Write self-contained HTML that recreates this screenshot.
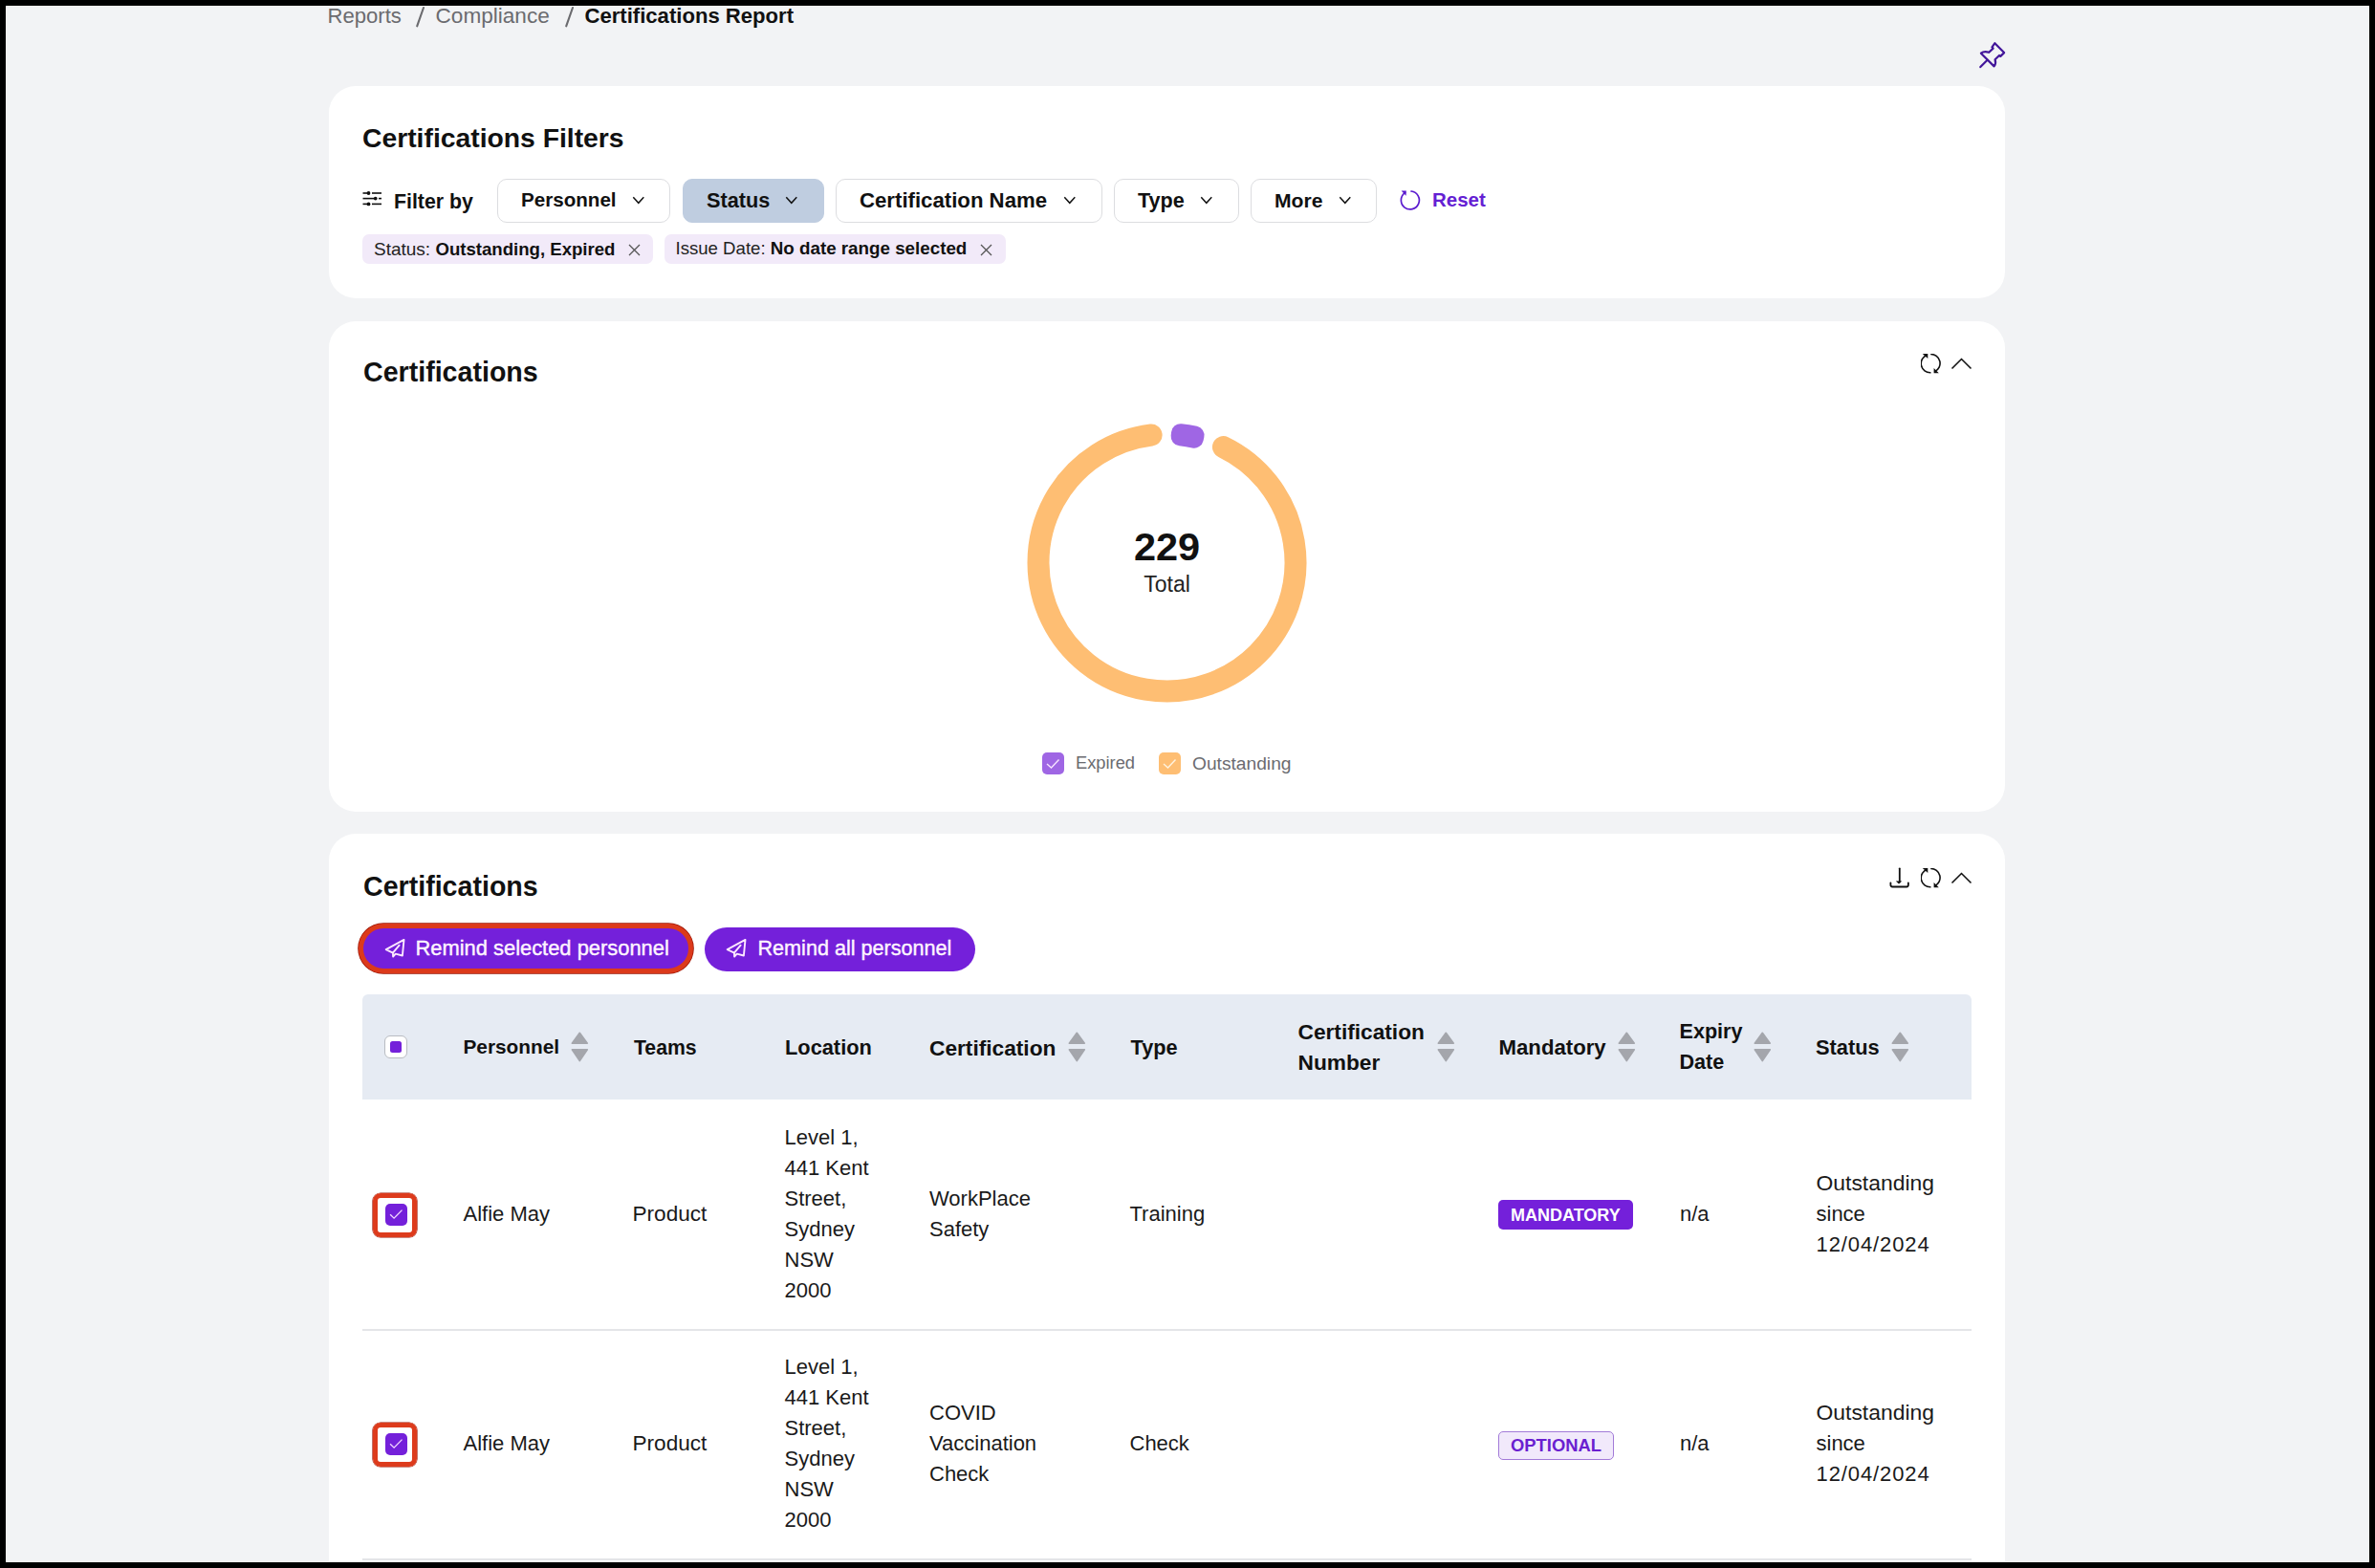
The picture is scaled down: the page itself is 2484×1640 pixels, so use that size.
<!DOCTYPE html>
<html><head><meta charset="utf-8">
<style>
*{box-sizing:border-box;margin:0;padding:0}
html,body{width:2484px;height:1640px;overflow:hidden;background:#f2f3f5}
body{position:relative;font-family:"Liberation Sans",sans-serif;color:#111}
.a{position:absolute}
.t{position:absolute;white-space:nowrap;line-height:1}
.b{font-weight:700}
.card{position:absolute;left:344px;width:1753px;background:#fff;border-radius:28px}
.frame{position:absolute;left:0;top:0;width:2484px;height:1640px;border:6px solid #000;box-shadow:inset 0 0 0 1px #fff;pointer-events:none;z-index:50}
.fbtn{position:absolute;top:187px;height:46px;border:1.5px solid #dcdde0;border-radius:10px;background:#fff}
.chev{position:absolute}
.chip{position:absolute;top:245px;height:31px;background:#f2eaf9;border-radius:7px}
.hd{position:absolute;white-space:nowrap;line-height:1;font-weight:700;font-size:22px;color:#111}
.cell{position:absolute;white-space:nowrap;font-size:22px;line-height:32px;color:#1a1a1a}
.sort{position:absolute;width:20px;height:33px}
</style></head><body>

<!-- breadcrumb -->
<div class="t" style="left:342.5px;top:5.8px;font-size:22.1px;color:#6b6b6f">Reports</div>
<svg class="a" style="left:425px;top:0" width="30" height="34" viewBox="0 0 30 34"><path d="M18 8 L11.2 27.3" stroke="#6b6b6f" stroke-width="2.1" stroke-linecap="round"/></svg>
<div class="t" style="left:455.5px;top:5.8px;font-size:22.6px;color:#6b6b6f">Compliance</div>
<svg class="a" style="left:580.5px;top:0" width="30" height="34" viewBox="0 0 30 34"><path d="M18 8 L11.2 27.3" stroke="#6b6b6f" stroke-width="2.1" stroke-linecap="round"/></svg>
<div class="t b" style="left:611.5px;top:5.8px;font-size:22.1px;color:#111">Certifications Report</div>

<!-- pin -->
<svg class="a" style="left:2060px;top:35px" width="50" height="50" viewBox="0 0 50 50">
<g fill="none" stroke="#43169a" stroke-width="2.2" stroke-linejoin="round" stroke-linecap="round">
<path d="M18.6 27.7 L11.3 35.1"/>
<path d="M26.4 10.2 L36.1 20.1 L32.3 23.9 L31 23 L26.6 27.3 C27.6 30 27.2 32.3 25.6 34.4 L11.9 20.7 C14 19 16.6 18.6 20.2 19.8 L24.6 15.6 L23.4 14.3 Z"/>
</g></svg>

<!-- FILTER CARD -->
<div class="card" style="top:90px;height:222px"></div>
<div class="t b" style="left:379px;top:130.3px;font-size:28.3px">Certifications Filters</div>

<!-- filter icon -->
<svg class="a" style="left:378px;top:196px" width="24" height="24" viewBox="0 0 24 24">
<g stroke="#111" stroke-width="1.6" fill="#111">
<line x1="1.5" y1="6" x2="6" y2="6"/><line x1="11" y1="6" x2="21" y2="6"/><circle cx="7.5" cy="6" r="1.9" stroke="none"/>
<line x1="1.5" y1="11.6" x2="13" y2="11.6"/><line x1="18" y1="11.6" x2="21" y2="11.6"/><circle cx="14.7" cy="11.6" r="1.9" stroke="none"/>
<line x1="1.5" y1="17.4" x2="6" y2="17.4"/><line x1="11" y1="17.4" x2="21" y2="17.4"/><circle cx="7.5" cy="17.4" r="1.9" stroke="none"/>
</g></svg>
<div class="t b" style="left:412px;top:200.5px;font-size:21.3px">Filter by</div>

<div class="fbtn" style="left:520px;width:181px"></div>
<div class="t b" style="left:545px;top:199px;font-size:20.6px">Personnel</div>
<div class="fbtn" style="left:714px;width:148px;background:#bfcde0;border-color:#bfcde0"></div>
<div class="t b" style="left:739px;top:199px;font-size:21.7px">Status</div>
<div class="fbtn" style="left:874px;width:279px"></div>
<div class="t b" style="left:899px;top:199px;font-size:22.2px">Certification Name</div>
<div class="fbtn" style="left:1165px;width:131px"></div>
<div class="t b" style="left:1190px;top:199px;font-size:21.6px">Type</div>
<div class="fbtn" style="left:1308px;width:132px"></div>
<div class="t b" style="left:1333px;top:199px;font-size:21.1px">More</div>

<!-- chevrons down -->
<svg class="a" style="left:661px;top:204px" width="14" height="11" viewBox="0 0 14 11"><path d="M1.3 2.2 L6.8 8.3 L12.3 2.2" fill="none" stroke="#111" stroke-width="1.45"/></svg>
<svg class="a" style="left:821px;top:204px" width="14" height="11" viewBox="0 0 14 11"><path d="M1.3 2.2 L6.8 8.3 L12.3 2.2" fill="none" stroke="#111" stroke-width="1.45"/></svg>
<svg class="a" style="left:1112px;top:204px" width="14" height="11" viewBox="0 0 14 11"><path d="M1.3 2.2 L6.8 8.3 L12.3 2.2" fill="none" stroke="#111" stroke-width="1.45"/></svg>
<svg class="a" style="left:1255px;top:204px" width="14" height="11" viewBox="0 0 14 11"><path d="M1.3 2.2 L6.8 8.3 L12.3 2.2" fill="none" stroke="#111" stroke-width="1.45"/></svg>
<svg class="a" style="left:1400px;top:204px" width="14" height="11" viewBox="0 0 14 11"><path d="M1.3 2.2 L6.8 8.3 L12.3 2.2" fill="none" stroke="#111" stroke-width="1.45"/></svg>

<!-- reset -->
<svg class="a" style="left:1462px;top:197px" width="25" height="25" viewBox="0 0 25 25">
<g fill="none" stroke="#5b1bcf" stroke-width="1.7" stroke-linecap="round">
<path d="M14 3 A9.5 9.5 0 1 1 7.5 4.6"/>
</g>
<path d="M3.6 2.6 L8.8 2.4 L8.6 7.8 Z" fill="#5b1bcf"/>
</svg>
<div class="t b" style="left:1498px;top:199px;font-size:20.5px;color:#6420d3">Reset</div>

<!-- chips -->
<div class="chip" style="left:379px;width:304px"></div>
<div class="t" style="left:391px;top:251px;font-size:19px;color:#222">Status: <b style="font-size:18.6px;color:#111">Outstanding, Expired</b></div>
<svg class="a" style="left:656px;top:254px" width="15" height="15" viewBox="0 0 15 15"><path d="M2 2 L13 13 M13 2 L2 13" stroke="#555" stroke-width="1.3"/></svg>
<div class="chip" style="left:695px;width:357px"></div>
<div class="t" style="left:706.5px;top:251px;font-size:18.6px;color:#222">Issue Date: <b style="font-size:18.8px;color:#111">No date range selected</b></div>
<svg class="a" style="left:1024px;top:254px" width="15" height="15" viewBox="0 0 15 15"><path d="M2 2 L13 13 M13 2 L2 13" stroke="#555" stroke-width="1.3"/></svg>

<!-- CHART CARD -->
<div class="card" style="top:336px;height:513px"></div>
<div class="t b" style="left:380px;top:374.8px;font-size:28.6px">Certifications</div>

<!-- chart icons -->
<svg class="a" style="left:2009px;top:370px" width="21" height="21" viewBox="0 0 21 21">
<g fill="none" stroke="#111" stroke-width="1.6">
<path d="M10.5 19.7 A9.5 9.5 0 0 1 6.8 1.2"/>
<path d="M10.2 0.5 A9.5 9.5 0 0 1 14.6 18.6"/>
</g>
<path d="M1.8 0 L7.3 0 L7.3 5 Z M13.6 14.9 L13.6 20.2 L18.8 20.2 Z" fill="#111"/>
</svg>
<svg class="a" style="left:2040px;top:373px" width="23" height="14" viewBox="0 0 23 14"><path d="M1.5 12.5 L11.5 2.5 L21.5 12.5" fill="none" stroke="#111" stroke-width="1.55"/></svg>

<!-- donut -->
<svg class="a" style="left:1060px;top:428px" width="321" height="321" viewBox="0 0 321 321">
<path d="M 219.46 39.61 A 134.5 134.5 0 1 1 144.11 27.00" fill="none" stroke="#febe73" stroke-width="23" stroke-linecap="round"/>
<path d="M 174.75 24.95 A 136.3 136.3 0 0 1 189.77 27.38 L 189.00 30.90 A 132.7 132.7 0 0 0 174.37 28.53 Z" fill="#9f66e4" stroke="#9f66e4" stroke-width="19.5" stroke-linejoin="round"/>
</svg>
<div class="t b" style="left:1120px;width:201px;text-align:center;top:551px;font-size:41.5px">229</div>
<div class="t" style="left:1120px;width:201px;text-align:center;top:599.5px;font-size:23px;color:#222">Total</div>

<!-- legend -->
<div class="a" style="left:1090px;top:787px;width:23px;height:23px;border-radius:5px;background:#9f66e4"></div>
<svg class="a" style="left:1090px;top:787px" width="23" height="23" viewBox="0 0 23 23"><path d="M5 12 L9.5 16 L17.5 7.5" fill="none" stroke="#f6e3ff" stroke-width="1.4"/></svg>
<div class="t" style="left:1125px;top:789px;font-size:18.3px;color:#6b6b70">Expired</div>
<div class="a" style="left:1212px;top:787px;width:23px;height:23px;border-radius:5px;background:#febe73"></div>
<svg class="a" style="left:1212px;top:787px" width="23" height="23" viewBox="0 0 23 23"><path d="M5 12 L9.5 16 L17.5 7.5" fill="none" stroke="#fff3df" stroke-width="1.4"/></svg>
<div class="t" style="left:1247px;top:789px;font-size:19.2px;color:#6b6b70">Outstanding</div>


<!-- TABLE CARD -->
<div class="card" style="top:872px;height:800px"></div>
<div class="t b" style="left:380px;top:913px;font-size:28.6px">Certifications</div>

<!-- table card icons -->
<svg class="a" style="left:1976px;top:907px" width="22" height="22" viewBox="0 0 22 22">
<g fill="none" stroke="#111" stroke-width="1.8" stroke-linecap="round">
<path d="M10.8 1.3 L10.8 15.5"/>
<path d="M1.4 16.3 L1.4 18.6 Q1.4 20.5 3.3 20.5 L18.2 20.5 Q19.9 20.5 19.9 18.6 L19.9 16.3"/>
</g>
<path d="M6.8 14.4 L13.3 14.4 L10 17.6 Z" fill="#111"/>
</svg>
<svg class="a" style="left:2009px;top:907.5px" width="21" height="21" viewBox="0 0 21 21">
<g fill="none" stroke="#111" stroke-width="1.6">
<path d="M10.5 19.7 A9.5 9.5 0 0 1 6.8 1.2"/>
<path d="M10.2 0.5 A9.5 9.5 0 0 1 14.6 18.6"/>
</g>
<path d="M1.8 0 L7.3 0 L7.3 5 Z M13.6 14.9 L13.6 20.2 L18.8 20.2 Z" fill="#111"/>
</svg>
<svg class="a" style="left:2040px;top:911px" width="23" height="14" viewBox="0 0 23 14"><path d="M1.5 12.5 L11.5 2.5 L21.5 12.5" fill="none" stroke="#111" stroke-width="1.55"/></svg>

<!-- remind buttons -->
<div class="a" style="left:375px;top:966px;width:350px;height:52px;border-radius:26px;background:#7420da;border:5.5px solid #dc3a1b;box-shadow:0 0 0 0.8px #9b1505"></div>
<svg class="a" style="left:396.5px;top:976px" width="30" height="30" viewBox="0 0 30 30"><path d="M25.5 6.9 L6.7 17.1 L13.9 20.6 L14.1 24.5 L16.7 21.6 L23.9 23.5 Z M13.9 20.6 L20.6 12.7" fill="none" stroke="#fde8ff" stroke-width="1.9" stroke-linejoin="round" stroke-linecap="round"/></svg>
<div class="t" style="left:434.5px;top:981px;font-size:21.9px;color:#fff4ff;-webkit-text-stroke:0.4px #fff4ff">Remind selected personnel</div>
<div class="a" style="left:737px;top:970px;width:283px;height:46px;border-radius:23px;background:#7420da"></div>
<svg class="a" style="left:754px;top:976px" width="30" height="30" viewBox="0 0 30 30"><path d="M25.5 6.9 L6.7 17.1 L13.9 20.6 L14.1 24.5 L16.7 21.6 L23.9 23.5 Z M13.9 20.6 L20.6 12.7" fill="none" stroke="#fde8ff" stroke-width="1.9" stroke-linejoin="round" stroke-linecap="round"/></svg>
<div class="t" style="left:792.5px;top:981px;font-size:21.6px;color:#fff4ff;-webkit-text-stroke:0.4px #fff4ff">Remind all personnel</div>

<!-- table header -->
<div class="a" style="left:379px;top:1040px;width:1683px;height:110px;background:#e6ebf3;border-radius:6px 6px 0 0"></div>
<div class="a" style="left:402px;top:1083px;width:24px;height:23.5px;border:1.3px solid #b9bcc2;border-radius:6px;background:#fff"></div>
<div class="a" style="left:408px;top:1089px;width:11.5px;height:11.5px;border-radius:2.5px;background:#7420da"></div>

<div class="hd" style="left:484.5px;top:1085px;font-size:20.8px">Personnel</div>
<div class="hd" style="left:663px;top:1085px;font-size:21.2px">Teams</div>
<div class="hd" style="left:821px;top:1085px;font-size:21.8px">Location</div>
<div class="hd" style="left:972px;top:1085px;font-size:22.7px">Certification</div>
<div class="hd" style="left:1182.5px;top:1085px;font-size:21.7px">Type</div>
<div class="hd" style="left:1357.5px;top:1067.6px;font-size:22.7px;line-height:32px;top:1063.4px">Certification<br>Number</div>
<div class="hd" style="left:1567.5px;top:1085px;font-size:22.2px">Mandatory</div>
<div class="hd" style="left:1756.5px;line-height:32px;top:1063.4px;font-size:21.6px">Expiry<br>Date</div>
<div class="hd" style="left:1899px;top:1085px;font-size:21.8px">Status</div>

<svg width="0" height="0" style="position:absolute"><defs><g id="srt"><path d="M1.3 12.2 L9.3 1.3 L17.3 12.2 Z M1.3 18.8 L17.3 18.8 L9.3 30.6 Z" fill="#a4a6ac" stroke="#a4a6ac" stroke-width="1.6" stroke-linejoin="round"/></g></defs></svg>
<svg class="sort" style="left:597px;top:1079px" viewBox="0 0 20 33"><use href="#srt"/></svg>
<svg class="sort" style="left:1116.5px;top:1079px" viewBox="0 0 20 33"><use href="#srt"/></svg>
<svg class="sort" style="left:1502.5px;top:1079px" viewBox="0 0 20 33"><use href="#srt"/></svg>
<svg class="sort" style="left:1692px;top:1079px" viewBox="0 0 20 33"><use href="#srt"/></svg>
<svg class="sort" style="left:1834px;top:1079px" viewBox="0 0 20 33"><use href="#srt"/></svg>
<svg class="sort" style="left:1977.5px;top:1079px" viewBox="0 0 20 33"><use href="#srt"/></svg>

<!-- row 1 -->
<div class="a" style="left:390.4px;top:1248.4px;width:45.4px;height:45.4px;border:5px solid #dd3b1c;border-radius:8px;box-shadow:0 0 0 0.6px #9b1505"></div>
<div class="a" style="left:402.5px;top:1259px;width:23.5px;height:22.5px;border-radius:5px;background:#7420da"></div>
<svg class="a" style="left:402.5px;top:1259px" width="24" height="23" viewBox="0 0 24 23"><path d="M5.1 11.2 L9.1 15.1 L17.5 6.6" fill="none" stroke="#f3d7ff" stroke-width="1.3"/></svg>
<div class="cell" style="left:484.5px;top:1254px">Alfie May</div>
<div class="cell" style="left:661.5px;top:1254px;font-size:22.6px">Product</div>
<div class="cell" style="left:820.5px;top:1173.6px">Level 1,<br>441 Kent<br>Street,<br>Sydney<br>NSW<br>2000</div>
<div class="cell" style="left:972px;top:1237.5px">WorkPlace<br>Safety</div>
<div class="cell" style="left:1181.5px;top:1254px">Training</div>
<div class="a" style="left:1567px;top:1255px;width:141px;height:31px;border-radius:5px;background:#7420da"></div>
<div class="t b" style="left:1580px;top:1262px;font-size:18px;color:#fff">MANDATORY</div>
<div class="cell" style="left:1757px;top:1254px">n/a</div>
<div class="cell" style="left:1899.5px;top:1221.2px"><span style="font-size:22.9px">Outstanding</span><br>since<br><span style="letter-spacing:0.9px">12/04/2024</span></div>
<div class="a" style="left:379px;top:1390px;width:1683px;height:1.5px;background:#e4e5e8"></div>

<!-- row 2 -->
<div class="a" style="left:390.4px;top:1488.4px;width:45.4px;height:45.4px;border:5px solid #dd3b1c;border-radius:8px;box-shadow:0 0 0 0.6px #9b1505"></div>
<div class="a" style="left:402.5px;top:1499px;width:23.5px;height:22.5px;border-radius:5px;background:#7420da"></div>
<svg class="a" style="left:402.5px;top:1499px" width="24" height="23" viewBox="0 0 24 23"><path d="M5.1 11.2 L9.1 15.1 L17.5 6.6" fill="none" stroke="#f3d7ff" stroke-width="1.3"/></svg>
<div class="cell" style="left:484.5px;top:1494px">Alfie May</div>
<div class="cell" style="left:661.5px;top:1494px;font-size:22.6px">Product</div>
<div class="cell" style="left:820.5px;top:1413.6px">Level 1,<br>441 Kent<br>Street,<br>Sydney<br>NSW<br>2000</div>
<div class="cell" style="left:972px;top:1461.5px">COVID<br>Vaccination<br>Check</div>
<div class="cell" style="left:1181.5px;top:1494px">Check</div>
<div class="a" style="left:1566.5px;top:1496.5px;width:121px;height:30.5px;border-radius:5px;background:#f1e9fb;border:1.3px solid #a27ad8"></div>
<div class="t b" style="left:1580px;top:1503px;font-size:18.4px;color:#6a1fd0">OPTIONAL</div>
<div class="cell" style="left:1757px;top:1494px">n/a</div>
<div class="cell" style="left:1899.5px;top:1461.2px"><span style="font-size:22.9px">Outstanding</span><br>since<br><span style="letter-spacing:0.9px">12/04/2024</span></div>
<div class="a" style="left:379px;top:1630px;width:1683px;height:1.5px;background:#e4e5e8"></div>


<div class="frame"></div>
</body></html>
